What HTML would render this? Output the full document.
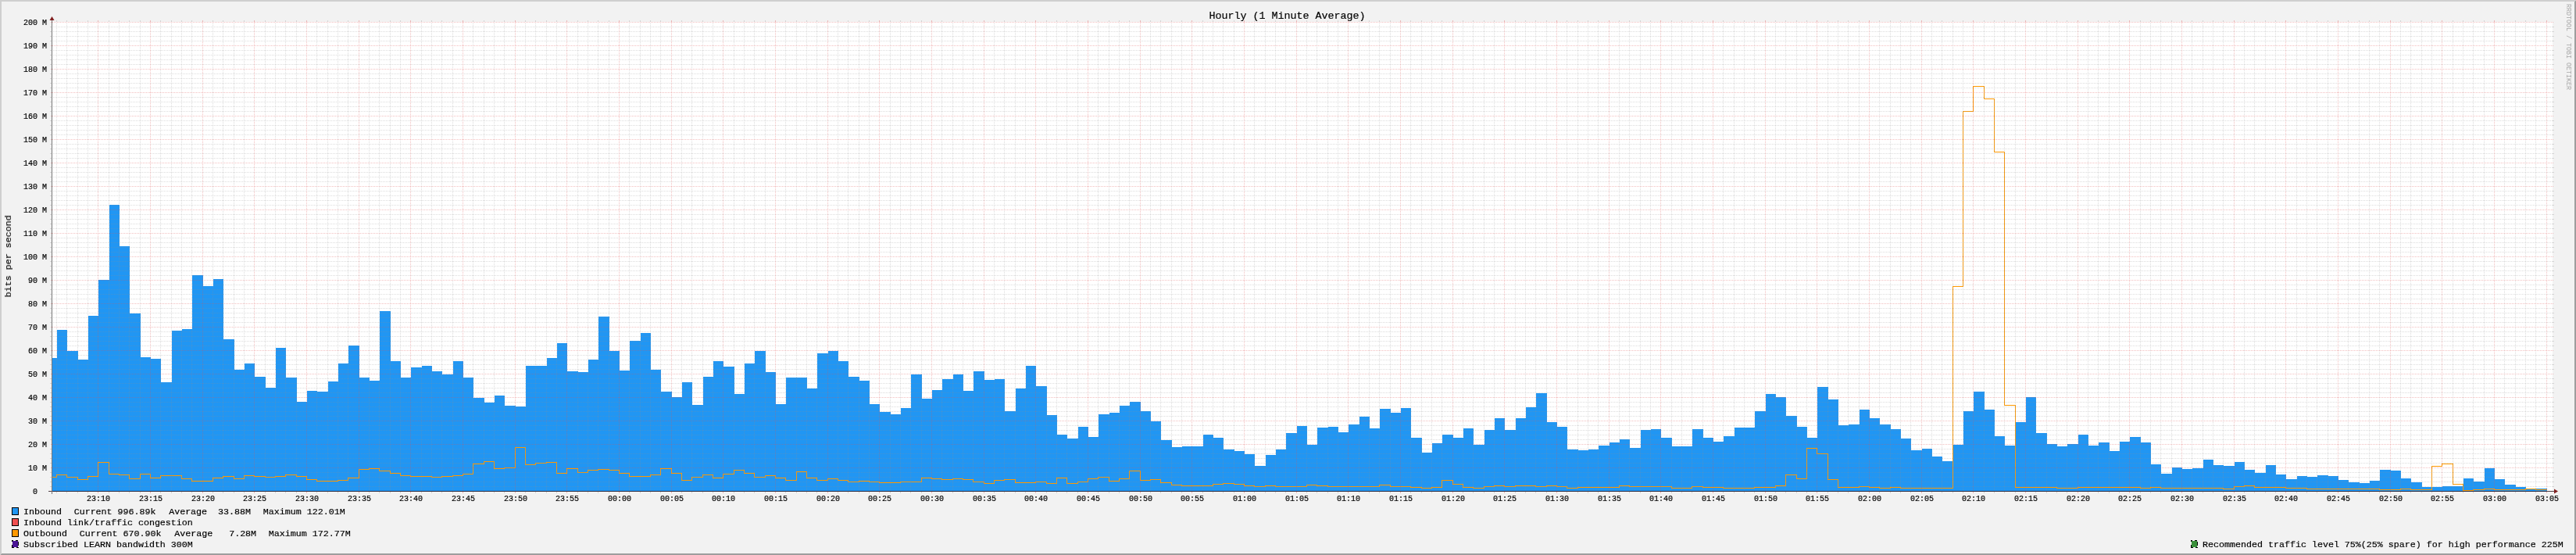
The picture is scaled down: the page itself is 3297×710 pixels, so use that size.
<!DOCTYPE html><html><head><meta charset="utf-8"><style>html,body{margin:0;padding:0;background:#F2F2F2;overflow:hidden}svg{display:block}</style></head><body><svg width="3297" height="710" viewBox="0 0 3297 710" shape-rendering="crispEdges"><rect x="0" y="0" width="3297" height="710" fill="#F2F2F2"/><polygon points="0,0 3297,0 3295,2 2,2 2,708 0,710" fill="#CFCFCF"/><polygon points="0,710 3297,710 3297,0 3295,2 3295,708 2,708" fill="#9E9E9E"/><rect x="67" y="28" width="3200" height="600" fill="#FFFFFF"/><path d="M67 458H73V629H67ZM73 422H86V629H73ZM86 449H100V629H86ZM100 460H113V629H100ZM113 404H126V629H113ZM126 358H140V629H126ZM140 262H153V629H140ZM153 315H166V629H153ZM166 401H180V629H166ZM180 457H193V629H180ZM193 459H206V629H193ZM206 489H220V629H206ZM220 423H233V629H220ZM233 421H246V629H233ZM246 352H260V629H246ZM260 366H273V629H260ZM273 357H286V629H273ZM286 434H300V629H286ZM300 473H313V629H300ZM313 465H326V629H313ZM326 482H340V629H326ZM340 496H353V629H340ZM353 445H366V629H353ZM366 483H380V629H366ZM380 514H393V629H380ZM393 500H406V629H393ZM406 501H420V629H406ZM420 488H433V629H420ZM433 465H446V629H433ZM446 442H460V629H446ZM460 483H473V629H460ZM473 487H486V629H473ZM486 398H500V629H486ZM500 462H513V629H500ZM513 483H526V629H513ZM526 470H540V629H526ZM540 468H553V629H540ZM553 475H566V629H553ZM566 479H580V629H566ZM580 462H593V629H580ZM593 483H606V629H593ZM606 509H620V629H606ZM620 515H633V629H620ZM633 506H646V629H633ZM646 519H660V629H646ZM660 520H673V629H660ZM673 468H686V629H673ZM686 468H700V629H686ZM700 458H713V629H700ZM713 439H726V629H713ZM726 475H740V629H726ZM740 476H753V629H740ZM753 460H766V629H753ZM766 405H780V629H766ZM780 449H793V629H780ZM793 474H806V629H793ZM806 436H820V629H806ZM820 426H833V629H820ZM833 473H846V629H833ZM846 501H860V629H846ZM860 508H873V629H860ZM873 489H886V629H873ZM886 518H900V629H886ZM900 482H913V629H900ZM913 462H926V629H913ZM926 469H940V629H926ZM940 504H953V629H940ZM953 465H966V629H953ZM966 449H980V629H966ZM980 476H993V629H980ZM993 517H1006V629H993ZM1006 483H1020V629H1006ZM1020 483H1033V629H1020ZM1033 497H1046V629H1033ZM1046 452H1060V629H1046ZM1060 449H1073V629H1060ZM1073 462H1086V629H1073ZM1086 482H1100V629H1086ZM1100 487H1113V629H1100ZM1113 517H1126V629H1113ZM1126 527H1140V629H1126ZM1140 530H1153V629H1140ZM1153 522H1166V629H1153ZM1166 479H1180V629H1166ZM1180 510H1193V629H1180ZM1193 499H1206V629H1193ZM1206 485H1220V629H1206ZM1220 479H1233V629H1220ZM1233 500H1246V629H1233ZM1246 475H1260V629H1246ZM1260 486H1273V629H1260ZM1273 485H1286V629H1273ZM1286 526H1300V629H1286ZM1300 497H1313V629H1300ZM1313 468H1326V629H1313ZM1326 494H1340V629H1326ZM1340 531H1353V629H1340ZM1353 556H1366V629H1353ZM1366 561H1380V629H1366ZM1380 546H1393V629H1380ZM1393 559H1406V629H1393ZM1406 530H1420V629H1406ZM1420 528H1433V629H1420ZM1433 519H1446V629H1433ZM1446 514H1460V629H1446ZM1460 526H1473V629H1460ZM1473 539H1486V629H1473ZM1486 563H1500V629H1486ZM1500 572H1513V629H1500ZM1513 571H1526V629H1513ZM1526 571H1540V629H1526ZM1540 556H1553V629H1540ZM1553 560H1566V629H1553ZM1566 575H1580V629H1566ZM1580 577H1593V629H1580ZM1593 581H1606V629H1593ZM1606 596H1620V629H1606ZM1620 582H1633V629H1620ZM1633 575H1646V629H1633ZM1646 554H1660V629H1646ZM1660 545H1673V629H1660ZM1673 569H1686V629H1673ZM1686 547H1700V629H1686ZM1700 546H1713V629H1700ZM1713 553H1726V629H1713ZM1726 543H1740V629H1726ZM1740 533H1753V629H1740ZM1753 548H1766V629H1753ZM1766 523H1780V629H1766ZM1780 528H1793V629H1780ZM1793 522H1806V629H1793ZM1806 560H1820V629H1806ZM1820 579H1833V629H1820ZM1833 567H1846V629H1833ZM1846 556H1860V629H1846ZM1860 560H1873V629H1860ZM1873 548H1886V629H1873ZM1886 569H1900V629H1886ZM1900 550H1913V629H1900ZM1913 535H1926V629H1913ZM1926 550H1940V629H1926ZM1940 535H1953V629H1940ZM1953 521H1966V629H1953ZM1966 503H1980V629H1966ZM1980 540H1993V629H1980ZM1993 546H2006V629H1993ZM2006 575H2020V629H2006ZM2020 576H2033V629H2020ZM2033 575H2046V629H2033ZM2046 570H2060V629H2046ZM2060 566H2073V629H2060ZM2073 562H2086V629H2073ZM2086 573H2100V629H2086ZM2100 550H2113V629H2100ZM2113 549H2126V629H2113ZM2126 560H2140V629H2126ZM2140 571H2153V629H2140ZM2153 571H2166V629H2153ZM2166 549H2180V629H2166ZM2180 560H2193V629H2180ZM2193 565H2206V629H2193ZM2206 558H2220V629H2206ZM2220 547H2233V629H2220ZM2233 547H2246V629H2233ZM2246 526H2260V629H2246ZM2260 504H2273V629H2260ZM2273 508H2286V629H2273ZM2286 532H2300V629H2286ZM2300 546H2313V629H2300ZM2313 560H2326V629H2313ZM2326 495H2340V629H2326ZM2340 511H2353V629H2340ZM2353 544H2366V629H2353ZM2366 543H2380V629H2366ZM2380 524H2393V629H2380ZM2393 535H2406V629H2393ZM2406 543H2420V629H2406ZM2420 549H2433V629H2420ZM2433 561H2446V629H2433ZM2446 576H2460V629H2446ZM2460 574H2473V629H2460ZM2473 584H2486V629H2473ZM2486 590H2500V629H2486ZM2500 569H2513V629H2500ZM2513 526H2526V629H2513ZM2526 501H2540V629H2526ZM2540 524H2553V629H2540ZM2553 558H2566V629H2553ZM2566 570H2580V629H2566ZM2580 540H2593V629H2580ZM2593 508H2606V629H2593ZM2606 554H2620V629H2606ZM2620 568H2633V629H2620ZM2633 571H2646V629H2633ZM2646 568H2660V629H2646ZM2660 556H2673V629H2660ZM2673 570H2686V629H2673ZM2686 566H2700V629H2686ZM2700 577H2713V629H2700ZM2713 565H2726V629H2713ZM2726 559H2740V629H2726ZM2740 566H2753V629H2740ZM2753 594H2766V629H2753ZM2766 606H2780V629H2766ZM2780 598H2793V629H2780ZM2793 600H2806V629H2793ZM2806 599H2820V629H2806ZM2820 588H2833V629H2820ZM2833 595H2846V629H2833ZM2846 596H2860V629H2846ZM2860 591H2873V629H2860ZM2873 601H2886V629H2873ZM2886 605H2900V629H2886ZM2900 595H2913V629H2900ZM2913 607H2926V629H2913ZM2926 613H2940V629H2926ZM2940 609H2953V629H2940ZM2953 610H2966V629H2953ZM2966 608H2980V629H2966ZM2980 609H2993V629H2980ZM2993 614H3006V629H2993ZM3006 617H3020V629H3006ZM3020 618H3033V629H3020ZM3033 615H3046V629H3033ZM3046 601H3060V629H3046ZM3060 602H3073V629H3060ZM3073 612H3086V629H3073ZM3086 617H3100V629H3086ZM3100 623H3113V629H3100ZM3113 623H3126V629H3113ZM3126 622H3140V629H3126ZM3140 622H3153V629H3140ZM3153 612H3166V629H3153ZM3166 616H3180V629H3166ZM3180 599H3193V629H3180ZM3193 613H3206V629H3193ZM3206 620H3220V629H3206ZM3220 623H3233V629H3220ZM3233 625H3246V629H3233ZM3246 625H3260V629H3246Z" fill="#2196F3"/><path d="M67 610.5H72.5V607.5H85.5V610.5H99.5V613.5H112.5V609.5H125.5V591.5H139.5V606.5H152.5V607.5H165.5V612.5H179.5V606.5H192.5V611.5H205.5V608.5H219.5V608.5H232.5V612.5H245.5V615.5H259.5V615.5H272.5V611.5H285.5V609.5H299.5V612.5H312.5V608.5H325.5V609.5H339.5V610.5H352.5V609.5H365.5V607.5H379.5V609.5H392.5V613.5H405.5V615.5H419.5V615.5H432.5V614.5H445.5V611.5H459.5V600.5H472.5V599.5H485.5V602.5H499.5V605.5H512.5V608.5H525.5V609.5H539.5V609.5H552.5V610.5H565.5V609.5H579.5V608.5H592.5V606.5H605.5V593.5H619.5V590.5H632.5V599.5H645.5V598.5H659.5V572.5H672.5V594.5H685.5V592.5H699.5V591.5H712.5V605.5H725.5V599.5H739.5V604.5H752.5V601.5H765.5V600.5H779.5V601.5H792.5V605.5H805.5V609.5H819.5V609.5H832.5V607.5H845.5V599.5H859.5V605.5H872.5V614.5H885.5V610.5H899.5V607.5H912.5V611.5H925.5V606.5H939.5V601.5H952.5V605.5H965.5V610.5H979.5V608.5H992.5V611.5H1005.5V614.5H1019.5V603.5H1032.5V611.5H1045.5V614.5H1059.5V612.5H1072.5V614.5H1085.5V616.5H1099.5V615.5H1112.5V616.5H1125.5V617.5H1139.5V617.5H1152.5V616.5H1165.5V616.5H1179.5V611.5H1192.5V612.5H1205.5V613.5H1219.5V612.5H1232.5V613.5H1245.5V616.5H1259.5V618.5H1272.5V614.5H1285.5V613.5H1299.5V617.5H1312.5V617.5H1325.5V616.5H1339.5V618.5H1352.5V611.5H1365.5V618.5H1379.5V616.5H1392.5V612.5H1405.5V610.5H1419.5V615.5H1432.5V612.5H1445.5V602.5H1459.5V614.5H1472.5V613.5H1485.5V617.5H1499.5V620.5H1512.5V621.5H1525.5V621.5H1539.5V621.5H1552.5V619.5H1565.5V618.5H1579.5V619.5H1592.5V621.5H1605.5V622.5H1619.5V621.5H1632.5V622.5H1645.5V622.5H1659.5V622.5H1672.5V620.5H1685.5V621.5H1699.5V622.5H1712.5V622.5H1725.5V622.5H1739.5V622.5H1752.5V622.5H1765.5V620.5H1779.5V622.5H1792.5V622.5H1805.5V623.5H1819.5V624.5H1832.5V623.5H1845.5V614.5H1859.5V619.5H1872.5V623.5H1885.5V624.5H1899.5V622.5H1912.5V621.5H1925.5V622.5H1939.5V621.5H1952.5V621.5H1965.5V622.5H1979.5V621.5H1992.5V622.5H2005.5V624.5H2019.5V623.5H2032.5V623.5H2045.5V623.5H2059.5V623.5H2072.5V621.5H2085.5V622.5H2099.5V622.5H2112.5V622.5H2125.5V622.5H2139.5V624.5H2152.5V624.5H2165.5V622.5H2179.5V623.5H2192.5V623.5H2205.5V624.5H2219.5V624.5H2232.5V624.5H2245.5V623.5H2259.5V623.5H2272.5V621.5H2285.5V607.5H2299.5V612.5H2312.5V573.5H2325.5V580.5H2339.5V613.5H2352.5V623.5H2365.5V623.5H2379.5V622.5H2392.5V623.5H2405.5V624.5H2419.5V623.5H2432.5V624.5H2445.5V624.5H2459.5V624.5H2472.5V624.5H2485.5V624.5H2499.5V366.5H2512.5V142.5H2525.5V110.5H2539.5V126.5H2552.5V194.5H2565.5V518.5H2579.5V623.5H2592.5V623.5H2605.5V623.5H2619.5V623.5H2632.5V624.5H2645.5V624.5H2659.5V623.5H2672.5V623.5H2685.5V623.5H2699.5V623.5H2712.5V623.5H2725.5V623.5H2739.5V624.5H2752.5V623.5H2765.5V624.5H2779.5V624.5H2792.5V624.5H2805.5V624.5H2819.5V624.5H2832.5V624.5H2845.5V625.5H2859.5V622.5H2872.5V621.5H2885.5V623.5H2899.5V623.5H2912.5V623.5H2925.5V624.5H2939.5V624.5H2952.5V625.5H2965.5V625.5H2979.5V625.5H2992.5V625.5H3005.5V625.5H3019.5V625.5H3032.5V625.5H3045.5V626.5H3059.5V626.5H3072.5V625.5H3085.5V626.5H3099.5V626.5H3112.5V596.5H3125.5V593.5H3139.5V619.5H3152.5V627.5H3165.5V626.5H3179.5V625.5H3192.5V626.5H3205.5V626.5H3219.5V626.5H3232.5V625.5H3245.5V626.5H3259.5" fill="none" stroke="#FF9900" stroke-width="1" stroke-linecap="square"/><path d="M66 622.5H3267M66 616.5H3267M66 610.5H3267M66 604.5H3267M66 592.5H3267M66 586.5H3267M66 580.5H3267M66 574.5H3267M66 562.5H3267M66 556.5H3267M66 550.5H3267M66 544.5H3267M66 532.5H3267M66 526.5H3267M66 520.5H3267M66 514.5H3267M66 502.5H3267M66 496.5H3267M66 490.5H3267M66 484.5H3267M66 472.5H3267M66 466.5H3267M66 460.5H3267M66 454.5H3267M66 442.5H3267M66 436.5H3267M66 430.5H3267M66 424.5H3267M66 412.5H3267M66 406.5H3267M66 400.5H3267M66 394.5H3267M66 382.5H3267M66 376.5H3267M66 370.5H3267M66 364.5H3267M66 352.5H3267M66 346.5H3267M66 340.5H3267M66 334.5H3267M66 322.5H3267M66 316.5H3267M66 310.5H3267M66 304.5H3267M66 292.5H3267M66 286.5H3267M66 280.5H3267M66 274.5H3267M66 262.5H3267M66 256.5H3267M66 250.5H3267M66 244.5H3267M66 232.5H3267M66 226.5H3267M66 220.5H3267M66 214.5H3267M66 202.5H3267M66 196.5H3267M66 190.5H3267M66 184.5H3267M66 172.5H3267M66 166.5H3267M66 160.5H3267M66 154.5H3267M66 142.5H3267M66 136.5H3267M66 130.5H3267M66 124.5H3267M66 112.5H3267M66 106.5H3267M66 100.5H3267M66 94.5H3267M66 82.5H3267M66 76.5H3267M66 70.5H3267M66 64.5H3267M66 52.5H3267M66 46.5H3267M66 40.5H3267M66 34.5H3267" stroke="rgba(143,143,143,0.3)" stroke-width="1" stroke-dasharray="1 1" fill="none"/><path d="M72.5 30V628M85.5 30V628M99.5 30V628M112.5 30V628M139.5 30V628M152.5 30V628M165.5 30V628M179.5 30V628M205.5 30V628M219.5 30V628M232.5 30V628M245.5 30V628M272.5 30V628M285.5 30V628M299.5 30V628M312.5 30V628M339.5 30V628M352.5 30V628M365.5 30V628M379.5 30V628M405.5 30V628M419.5 30V628M432.5 30V628M445.5 30V628M472.5 30V628M485.5 30V628M499.5 30V628M512.5 30V628M539.5 30V628M552.5 30V628M565.5 30V628M579.5 30V628M605.5 30V628M619.5 30V628M632.5 30V628M645.5 30V628M672.5 30V628M685.5 30V628M699.5 30V628M712.5 30V628M739.5 30V628M752.5 30V628M765.5 30V628M779.5 30V628M805.5 30V628M819.5 30V628M832.5 30V628M845.5 30V628M872.5 30V628M885.5 30V628M899.5 30V628M912.5 30V628M939.5 30V628M952.5 30V628M965.5 30V628M979.5 30V628M1005.5 30V628M1019.5 30V628M1032.5 30V628M1045.5 30V628M1072.5 30V628M1085.5 30V628M1099.5 30V628M1112.5 30V628M1139.5 30V628M1152.5 30V628M1165.5 30V628M1179.5 30V628M1205.5 30V628M1219.5 30V628M1232.5 30V628M1245.5 30V628M1272.5 30V628M1285.5 30V628M1299.5 30V628M1312.5 30V628M1339.5 30V628M1352.5 30V628M1365.5 30V628M1379.5 30V628M1405.5 30V628M1419.5 30V628M1432.5 30V628M1445.5 30V628M1472.5 30V628M1485.5 30V628M1499.5 30V628M1512.5 30V628M1539.5 30V628M1552.5 30V628M1565.5 30V628M1579.5 30V628M1605.5 30V628M1619.5 30V628M1632.5 30V628M1645.5 30V628M1672.5 30V628M1685.5 30V628M1699.5 30V628M1712.5 30V628M1739.5 30V628M1752.5 30V628M1765.5 30V628M1779.5 30V628M1805.5 30V628M1819.5 30V628M1832.5 30V628M1845.5 30V628M1872.5 30V628M1885.5 30V628M1899.5 30V628M1912.5 30V628M1939.5 30V628M1952.5 30V628M1965.5 30V628M1979.5 30V628M2005.5 30V628M2019.5 30V628M2032.5 30V628M2045.5 30V628M2072.5 30V628M2085.5 30V628M2099.5 30V628M2112.5 30V628M2139.5 30V628M2152.5 30V628M2165.5 30V628M2179.5 30V628M2205.5 30V628M2219.5 30V628M2232.5 30V628M2245.5 30V628M2272.5 30V628M2285.5 30V628M2299.5 30V628M2312.5 30V628M2339.5 30V628M2352.5 30V628M2365.5 30V628M2379.5 30V628M2405.5 30V628M2419.5 30V628M2432.5 30V628M2445.5 30V628M2472.5 30V628M2485.5 30V628M2499.5 30V628M2512.5 30V628M2539.5 30V628M2552.5 30V628M2565.5 30V628M2579.5 30V628M2605.5 30V628M2619.5 30V628M2632.5 30V628M2645.5 30V628M2672.5 30V628M2685.5 30V628M2699.5 30V628M2712.5 30V628M2739.5 30V628M2752.5 30V628M2765.5 30V628M2779.5 30V628M2805.5 30V628M2819.5 30V628M2832.5 30V628M2845.5 30V628M2872.5 30V628M2885.5 30V628M2899.5 30V628M2912.5 30V628M2939.5 30V628M2952.5 30V628M2965.5 30V628M2979.5 30V628M3005.5 30V628M3019.5 30V628M3032.5 30V628M3045.5 30V628M3072.5 30V628M3085.5 30V628M3099.5 30V628M3112.5 30V628M3139.5 30V628M3152.5 30V628M3165.5 30V628M3179.5 30V628M3205.5 30V628M3219.5 30V628M3232.5 30V628M3245.5 30V628" stroke="rgba(143,143,143,0.3)" stroke-width="1" stroke-dasharray="1 1" fill="none"/><path d="M64 622.5H66M3267 622.5H3269M64 616.5H66M3267 616.5H3269M64 610.5H66M3267 610.5H3269M64 604.5H66M3267 604.5H3269M64 592.5H66M3267 592.5H3269M64 586.5H66M3267 586.5H3269M64 580.5H66M3267 580.5H3269M64 574.5H66M3267 574.5H3269M64 562.5H66M3267 562.5H3269M64 556.5H66M3267 556.5H3269M64 550.5H66M3267 550.5H3269M64 544.5H66M3267 544.5H3269M64 532.5H66M3267 532.5H3269M64 526.5H66M3267 526.5H3269M64 520.5H66M3267 520.5H3269M64 514.5H66M3267 514.5H3269M64 502.5H66M3267 502.5H3269M64 496.5H66M3267 496.5H3269M64 490.5H66M3267 490.5H3269M64 484.5H66M3267 484.5H3269M64 472.5H66M3267 472.5H3269M64 466.5H66M3267 466.5H3269M64 460.5H66M3267 460.5H3269M64 454.5H66M3267 454.5H3269M64 442.5H66M3267 442.5H3269M64 436.5H66M3267 436.5H3269M64 430.5H66M3267 430.5H3269M64 424.5H66M3267 424.5H3269M64 412.5H66M3267 412.5H3269M64 406.5H66M3267 406.5H3269M64 400.5H66M3267 400.5H3269M64 394.5H66M3267 394.5H3269M64 382.5H66M3267 382.5H3269M64 376.5H66M3267 376.5H3269M64 370.5H66M3267 370.5H3269M64 364.5H66M3267 364.5H3269M64 352.5H66M3267 352.5H3269M64 346.5H66M3267 346.5H3269M64 340.5H66M3267 340.5H3269M64 334.5H66M3267 334.5H3269M64 322.5H66M3267 322.5H3269M64 316.5H66M3267 316.5H3269M64 310.5H66M3267 310.5H3269M64 304.5H66M3267 304.5H3269M64 292.5H66M3267 292.5H3269M64 286.5H66M3267 286.5H3269M64 280.5H66M3267 280.5H3269M64 274.5H66M3267 274.5H3269M64 262.5H66M3267 262.5H3269M64 256.5H66M3267 256.5H3269M64 250.5H66M3267 250.5H3269M64 244.5H66M3267 244.5H3269M64 232.5H66M3267 232.5H3269M64 226.5H66M3267 226.5H3269M64 220.5H66M3267 220.5H3269M64 214.5H66M3267 214.5H3269M64 202.5H66M3267 202.5H3269M64 196.5H66M3267 196.5H3269M64 190.5H66M3267 190.5H3269M64 184.5H66M3267 184.5H3269M64 172.5H66M3267 172.5H3269M64 166.5H66M3267 166.5H3269M64 160.5H66M3267 160.5H3269M64 154.5H66M3267 154.5H3269M64 142.5H66M3267 142.5H3269M64 136.5H66M3267 136.5H3269M64 130.5H66M3267 130.5H3269M64 124.5H66M3267 124.5H3269M64 112.5H66M3267 112.5H3269M64 106.5H66M3267 106.5H3269M64 100.5H66M3267 100.5H3269M64 94.5H66M3267 94.5H3269M64 82.5H66M3267 82.5H3269M64 76.5H66M3267 76.5H3269M64 70.5H66M3267 70.5H3269M64 64.5H66M3267 64.5H3269M64 52.5H66M3267 52.5H3269M64 46.5H66M3267 46.5H3269M64 40.5H66M3267 40.5H3269M64 34.5H66M3267 34.5H3269M72.5 26V28M72.5 628V631M85.5 26V28M85.5 628V631M99.5 26V28M99.5 628V631M112.5 26V28M112.5 628V631M139.5 26V28M139.5 628V631M152.5 26V28M152.5 628V631M165.5 26V28M165.5 628V631M179.5 26V28M179.5 628V631M205.5 26V28M205.5 628V631M219.5 26V28M219.5 628V631M232.5 26V28M232.5 628V631M245.5 26V28M245.5 628V631M272.5 26V28M272.5 628V631M285.5 26V28M285.5 628V631M299.5 26V28M299.5 628V631M312.5 26V28M312.5 628V631M339.5 26V28M339.5 628V631M352.5 26V28M352.5 628V631M365.5 26V28M365.5 628V631M379.5 26V28M379.5 628V631M405.5 26V28M405.5 628V631M419.5 26V28M419.5 628V631M432.5 26V28M432.5 628V631M445.5 26V28M445.5 628V631M472.5 26V28M472.5 628V631M485.5 26V28M485.5 628V631M499.5 26V28M499.5 628V631M512.5 26V28M512.5 628V631M539.5 26V28M539.5 628V631M552.5 26V28M552.5 628V631M565.5 26V28M565.5 628V631M579.5 26V28M579.5 628V631M605.5 26V28M605.5 628V631M619.5 26V28M619.5 628V631M632.5 26V28M632.5 628V631M645.5 26V28M645.5 628V631M672.5 26V28M672.5 628V631M685.5 26V28M685.5 628V631M699.5 26V28M699.5 628V631M712.5 26V28M712.5 628V631M739.5 26V28M739.5 628V631M752.5 26V28M752.5 628V631M765.5 26V28M765.5 628V631M779.5 26V28M779.5 628V631M805.5 26V28M805.5 628V631M819.5 26V28M819.5 628V631M832.5 26V28M832.5 628V631M845.5 26V28M845.5 628V631M872.5 26V28M872.5 628V631M885.5 26V28M885.5 628V631M899.5 26V28M899.5 628V631M912.5 26V28M912.5 628V631M939.5 26V28M939.5 628V631M952.5 26V28M952.5 628V631M965.5 26V28M965.5 628V631M979.5 26V28M979.5 628V631M1005.5 26V28M1005.5 628V631M1019.5 26V28M1019.5 628V631M1032.5 26V28M1032.5 628V631M1045.5 26V28M1045.5 628V631M1072.5 26V28M1072.5 628V631M1085.5 26V28M1085.5 628V631M1099.5 26V28M1099.5 628V631M1112.5 26V28M1112.5 628V631M1139.5 26V28M1139.5 628V631M1152.5 26V28M1152.5 628V631M1165.5 26V28M1165.5 628V631M1179.5 26V28M1179.5 628V631M1205.5 26V28M1205.5 628V631M1219.5 26V28M1219.5 628V631M1232.5 26V28M1232.5 628V631M1245.5 26V28M1245.5 628V631M1272.5 26V28M1272.5 628V631M1285.5 26V28M1285.5 628V631M1299.5 26V28M1299.5 628V631M1312.5 26V28M1312.5 628V631M1339.5 26V28M1339.5 628V631M1352.5 26V28M1352.5 628V631M1365.5 26V28M1365.5 628V631M1379.5 26V28M1379.5 628V631M1405.5 26V28M1405.5 628V631M1419.5 26V28M1419.5 628V631M1432.5 26V28M1432.5 628V631M1445.5 26V28M1445.5 628V631M1472.5 26V28M1472.5 628V631M1485.5 26V28M1485.5 628V631M1499.5 26V28M1499.5 628V631M1512.5 26V28M1512.5 628V631M1539.5 26V28M1539.5 628V631M1552.5 26V28M1552.5 628V631M1565.5 26V28M1565.5 628V631M1579.5 26V28M1579.5 628V631M1605.5 26V28M1605.5 628V631M1619.5 26V28M1619.5 628V631M1632.5 26V28M1632.5 628V631M1645.5 26V28M1645.5 628V631M1672.5 26V28M1672.5 628V631M1685.5 26V28M1685.5 628V631M1699.5 26V28M1699.5 628V631M1712.5 26V28M1712.5 628V631M1739.5 26V28M1739.5 628V631M1752.5 26V28M1752.5 628V631M1765.5 26V28M1765.5 628V631M1779.5 26V28M1779.5 628V631M1805.5 26V28M1805.5 628V631M1819.5 26V28M1819.5 628V631M1832.5 26V28M1832.5 628V631M1845.5 26V28M1845.5 628V631M1872.5 26V28M1872.5 628V631M1885.5 26V28M1885.5 628V631M1899.5 26V28M1899.5 628V631M1912.5 26V28M1912.5 628V631M1939.5 26V28M1939.5 628V631M1952.5 26V28M1952.5 628V631M1965.5 26V28M1965.5 628V631M1979.5 26V28M1979.5 628V631M2005.5 26V28M2005.5 628V631M2019.5 26V28M2019.5 628V631M2032.5 26V28M2032.5 628V631M2045.5 26V28M2045.5 628V631M2072.5 26V28M2072.5 628V631M2085.5 26V28M2085.5 628V631M2099.5 26V28M2099.5 628V631M2112.5 26V28M2112.5 628V631M2139.5 26V28M2139.5 628V631M2152.5 26V28M2152.5 628V631M2165.5 26V28M2165.5 628V631M2179.5 26V28M2179.5 628V631M2205.5 26V28M2205.5 628V631M2219.5 26V28M2219.5 628V631M2232.5 26V28M2232.5 628V631M2245.5 26V28M2245.5 628V631M2272.5 26V28M2272.5 628V631M2285.5 26V28M2285.5 628V631M2299.5 26V28M2299.5 628V631M2312.5 26V28M2312.5 628V631M2339.5 26V28M2339.5 628V631M2352.5 26V28M2352.5 628V631M2365.5 26V28M2365.5 628V631M2379.5 26V28M2379.5 628V631M2405.5 26V28M2405.5 628V631M2419.5 26V28M2419.5 628V631M2432.5 26V28M2432.5 628V631M2445.5 26V28M2445.5 628V631M2472.5 26V28M2472.5 628V631M2485.5 26V28M2485.5 628V631M2499.5 26V28M2499.5 628V631M2512.5 26V28M2512.5 628V631M2539.5 26V28M2539.5 628V631M2552.5 26V28M2552.5 628V631M2565.5 26V28M2565.5 628V631M2579.5 26V28M2579.5 628V631M2605.5 26V28M2605.5 628V631M2619.5 26V28M2619.5 628V631M2632.5 26V28M2632.5 628V631M2645.5 26V28M2645.5 628V631M2672.5 26V28M2672.5 628V631M2685.5 26V28M2685.5 628V631M2699.5 26V28M2699.5 628V631M2712.5 26V28M2712.5 628V631M2739.5 26V28M2739.5 628V631M2752.5 26V28M2752.5 628V631M2765.5 26V28M2765.5 628V631M2779.5 26V28M2779.5 628V631M2805.5 26V28M2805.5 628V631M2819.5 26V28M2819.5 628V631M2832.5 26V28M2832.5 628V631M2845.5 26V28M2845.5 628V631M2872.5 26V28M2872.5 628V631M2885.5 26V28M2885.5 628V631M2899.5 26V28M2899.5 628V631M2912.5 26V28M2912.5 628V631M2939.5 26V28M2939.5 628V631M2952.5 26V28M2952.5 628V631M2965.5 26V28M2965.5 628V631M2979.5 26V28M2979.5 628V631M3005.5 26V28M3005.5 628V631M3019.5 26V28M3019.5 628V631M3032.5 26V28M3032.5 628V631M3045.5 26V28M3045.5 628V631M3072.5 26V28M3072.5 628V631M3085.5 26V28M3085.5 628V631M3099.5 26V28M3099.5 628V631M3112.5 26V28M3112.5 628V631M3139.5 26V28M3139.5 628V631M3152.5 26V28M3152.5 628V631M3165.5 26V28M3165.5 628V631M3179.5 26V28M3179.5 628V631M3205.5 26V28M3205.5 628V631M3219.5 26V28M3219.5 628V631M3232.5 26V28M3232.5 628V631M3245.5 26V28M3245.5 628V631" stroke="rgba(143,143,143,0.3)" stroke-width="1" fill="none"/><path d="M65 598.5H3269M65 568.5H3269M65 538.5H3269M65 508.5H3269M65 478.5H3269M65 448.5H3269M65 418.5H3269M65 388.5H3269M65 358.5H3269M65 328.5H3269M65 298.5H3269M65 268.5H3269M65 238.5H3269M65 208.5H3269M65 178.5H3269M65 148.5H3269M65 118.5H3269M65 88.5H3269M65 58.5H3269M65 28.5H3269" stroke="rgba(222,79,79,0.36)" stroke-width="1" stroke-dasharray="1 1" fill="none"/><path d="M125.5 28V628M192.5 28V628M259.5 28V628M325.5 28V628M392.5 28V628M459.5 28V628M525.5 28V628M592.5 28V628M659.5 28V628M725.5 28V628M792.5 28V628M859.5 28V628M925.5 28V628M992.5 28V628M1059.5 28V628M1125.5 28V628M1192.5 28V628M1259.5 28V628M1325.5 28V628M1392.5 28V628M1459.5 28V628M1525.5 28V628M1592.5 28V628M1659.5 28V628M1725.5 28V628M1792.5 28V628M1859.5 28V628M1925.5 28V628M1992.5 28V628M2059.5 28V628M2125.5 28V628M2192.5 28V628M2259.5 28V628M2325.5 28V628M2392.5 28V628M2459.5 28V628M2525.5 28V628M2592.5 28V628M2659.5 28V628M2725.5 28V628M2792.5 28V628M2859.5 28V628M2925.5 28V628M2992.5 28V628M3059.5 28V628M3125.5 28V628M3192.5 28V628M3259.5 28V628" stroke="rgba(222,79,79,0.36)" stroke-width="1" stroke-dasharray="1 1" fill="none"/><path d="M125.5 26V28M125.5 628V631M192.5 26V28M192.5 628V631M259.5 26V28M259.5 628V631M325.5 26V28M325.5 628V631M392.5 26V28M392.5 628V631M459.5 26V28M459.5 628V631M525.5 26V28M525.5 628V631M592.5 26V28M592.5 628V631M659.5 26V28M659.5 628V631M725.5 26V28M725.5 628V631M792.5 26V28M792.5 628V631M859.5 26V28M859.5 628V631M925.5 26V28M925.5 628V631M992.5 26V28M992.5 628V631M1059.5 26V28M1059.5 628V631M1125.5 26V28M1125.5 628V631M1192.5 26V28M1192.5 628V631M1259.5 26V28M1259.5 628V631M1325.5 26V28M1325.5 628V631M1392.5 26V28M1392.5 628V631M1459.5 26V28M1459.5 628V631M1525.5 26V28M1525.5 628V631M1592.5 26V28M1592.5 628V631M1659.5 26V28M1659.5 628V631M1725.5 26V28M1725.5 628V631M1792.5 26V28M1792.5 628V631M1859.5 26V28M1859.5 628V631M1925.5 26V28M1925.5 628V631M1992.5 26V28M1992.5 628V631M2059.5 26V28M2059.5 628V631M2125.5 26V28M2125.5 628V631M2192.5 26V28M2192.5 628V631M2259.5 26V28M2259.5 628V631M2325.5 26V28M2325.5 628V631M2392.5 26V28M2392.5 628V631M2459.5 26V28M2459.5 628V631M2525.5 26V28M2525.5 628V631M2592.5 26V28M2592.5 628V631M2659.5 26V28M2659.5 628V631M2725.5 26V28M2725.5 628V631M2792.5 26V28M2792.5 628V631M2859.5 26V28M2859.5 628V631M2925.5 26V28M2925.5 628V631M2992.5 26V28M2992.5 628V631M3059.5 26V28M3059.5 628V631M3125.5 26V28M3125.5 628V631M3192.5 26V28M3192.5 628V631M3259.5 26V28M3259.5 628V631" stroke="rgba(222,79,79,0.36)" stroke-width="1" fill="none"/><path d="M62 628.5H3269" stroke="rgba(20,20,30,0.75)" stroke-width="1" fill="none"/><path d="M63 628.5H3269" stroke="rgba(100,20,20,0.5)" stroke-dasharray="1 1" stroke-width="1" fill="none"/><path d="M66.5 24V632" stroke="#787878" stroke-width="1" fill="none"/><polygon points="3269,625.5 3269,631.5 3274,628.5" fill="#801F1F" shape-rendering="auto"/><polygon points="63.5,26 69.5,26 66.5,21" fill="#801F1F" shape-rendering="auto"/><rect x="15.5" y="649.5" width="8" height="9" fill="#2196F3" stroke="#000" stroke-width="1"/><rect x="15.5" y="663.5" width="8" height="9" fill="#F05050" stroke="#000" stroke-width="1"/><rect x="15.5" y="677.5" width="8" height="9" fill="#FF9900" stroke="#000" stroke-width="1"/><rect x="16" y="692" width="7" height="8" fill="#4B1696"/><rect x="15" y="691" width="2" height="1" fill="#000"/><rect x="20" y="691" width="3" height="1" fill="#000"/><rect x="23" y="693" width="1" height="5" fill="#000"/><rect x="15" y="700" width="3" height="1" fill="#000"/><rect x="21" y="700" width="3" height="1" fill="#000"/><rect x="15" y="691" width="1" height="2" fill="#000"/><rect x="15" y="697" width="1" height="4" fill="#000"/><rect x="2805" y="692" width="7" height="8" fill="#3A8F3A"/><rect x="2804" y="691" width="2" height="1" fill="#000"/><rect x="2809" y="691" width="3" height="1" fill="#000"/><rect x="2812" y="693" width="1" height="5" fill="#000"/><rect x="2804" y="700" width="3" height="1" fill="#000"/><rect x="2810" y="700" width="3" height="1" fill="#000"/><rect x="2804" y="691" width="1" height="2" fill="#000"/><rect x="2804" y="697" width="1" height="4" fill="#000"/><g style='font-family:"Liberation Mono",monospace' fill="#000" stroke="#000" stroke-width="0.2" opacity="0.999"><text x="1647.5" y="24" font-size="13.33" text-anchor="middle">Hourly (1 Minute Average)</text><text x="60" y="632" font-size="10" text-anchor="end" xml:space="preserve">0  </text><text x="60" y="602" font-size="10" text-anchor="end" xml:space="preserve">10 M</text><text x="60" y="572" font-size="10" text-anchor="end" xml:space="preserve">20 M</text><text x="60" y="542" font-size="10" text-anchor="end" xml:space="preserve">30 M</text><text x="60" y="512" font-size="10" text-anchor="end" xml:space="preserve">40 M</text><text x="60" y="482" font-size="10" text-anchor="end" xml:space="preserve">50 M</text><text x="60" y="452" font-size="10" text-anchor="end" xml:space="preserve">60 M</text><text x="60" y="422" font-size="10" text-anchor="end" xml:space="preserve">70 M</text><text x="60" y="392" font-size="10" text-anchor="end" xml:space="preserve">80 M</text><text x="60" y="362" font-size="10" text-anchor="end" xml:space="preserve">90 M</text><text x="60" y="332" font-size="10" text-anchor="end" xml:space="preserve">100 M</text><text x="60" y="302" font-size="10" text-anchor="end" xml:space="preserve">110 M</text><text x="60" y="272" font-size="10" text-anchor="end" xml:space="preserve">120 M</text><text x="60" y="242" font-size="10" text-anchor="end" xml:space="preserve">130 M</text><text x="60" y="212" font-size="10" text-anchor="end" xml:space="preserve">140 M</text><text x="60" y="182" font-size="10" text-anchor="end" xml:space="preserve">150 M</text><text x="60" y="152" font-size="10" text-anchor="end" xml:space="preserve">160 M</text><text x="60" y="122" font-size="10" text-anchor="end" xml:space="preserve">170 M</text><text x="60" y="92" font-size="10" text-anchor="end" xml:space="preserve">180 M</text><text x="60" y="62" font-size="10" text-anchor="end" xml:space="preserve">190 M</text><text x="60" y="32" font-size="10" text-anchor="end" xml:space="preserve">200 M</text><text x="126" y="641" font-size="10" text-anchor="middle">23:10</text><text x="193" y="641" font-size="10" text-anchor="middle">23:15</text><text x="260" y="641" font-size="10" text-anchor="middle">23:20</text><text x="326" y="641" font-size="10" text-anchor="middle">23:25</text><text x="393" y="641" font-size="10" text-anchor="middle">23:30</text><text x="460" y="641" font-size="10" text-anchor="middle">23:35</text><text x="526" y="641" font-size="10" text-anchor="middle">23:40</text><text x="593" y="641" font-size="10" text-anchor="middle">23:45</text><text x="660" y="641" font-size="10" text-anchor="middle">23:50</text><text x="726" y="641" font-size="10" text-anchor="middle">23:55</text><text x="793" y="641" font-size="10" text-anchor="middle">00:00</text><text x="860" y="641" font-size="10" text-anchor="middle">00:05</text><text x="926" y="641" font-size="10" text-anchor="middle">00:10</text><text x="993" y="641" font-size="10" text-anchor="middle">00:15</text><text x="1060" y="641" font-size="10" text-anchor="middle">00:20</text><text x="1126" y="641" font-size="10" text-anchor="middle">00:25</text><text x="1193" y="641" font-size="10" text-anchor="middle">00:30</text><text x="1260" y="641" font-size="10" text-anchor="middle">00:35</text><text x="1326" y="641" font-size="10" text-anchor="middle">00:40</text><text x="1393" y="641" font-size="10" text-anchor="middle">00:45</text><text x="1460" y="641" font-size="10" text-anchor="middle">00:50</text><text x="1526" y="641" font-size="10" text-anchor="middle">00:55</text><text x="1593" y="641" font-size="10" text-anchor="middle">01:00</text><text x="1660" y="641" font-size="10" text-anchor="middle">01:05</text><text x="1726" y="641" font-size="10" text-anchor="middle">01:10</text><text x="1793" y="641" font-size="10" text-anchor="middle">01:15</text><text x="1860" y="641" font-size="10" text-anchor="middle">01:20</text><text x="1926" y="641" font-size="10" text-anchor="middle">01:25</text><text x="1993" y="641" font-size="10" text-anchor="middle">01:30</text><text x="2060" y="641" font-size="10" text-anchor="middle">01:35</text><text x="2126" y="641" font-size="10" text-anchor="middle">01:40</text><text x="2193" y="641" font-size="10" text-anchor="middle">01:45</text><text x="2260" y="641" font-size="10" text-anchor="middle">01:50</text><text x="2326" y="641" font-size="10" text-anchor="middle">01:55</text><text x="2393" y="641" font-size="10" text-anchor="middle">02:00</text><text x="2460" y="641" font-size="10" text-anchor="middle">02:05</text><text x="2526" y="641" font-size="10" text-anchor="middle">02:10</text><text x="2593" y="641" font-size="10" text-anchor="middle">02:15</text><text x="2660" y="641" font-size="10" text-anchor="middle">02:20</text><text x="2726" y="641" font-size="10" text-anchor="middle">02:25</text><text x="2793" y="641" font-size="10" text-anchor="middle">02:30</text><text x="2860" y="641" font-size="10" text-anchor="middle">02:35</text><text x="2926" y="641" font-size="10" text-anchor="middle">02:40</text><text x="2993" y="641" font-size="10" text-anchor="middle">02:45</text><text x="3060" y="641" font-size="10" text-anchor="middle">02:50</text><text x="3126" y="641" font-size="10" text-anchor="middle">02:55</text><text x="3193" y="641" font-size="10" text-anchor="middle">03:00</text><text x="3260" y="641" font-size="10" text-anchor="middle">03:05</text><text transform="translate(14,327.8) rotate(-90)" font-size="11.67" text-anchor="middle">bits per second</text><text transform="translate(3285,60) rotate(90)" font-size="8.33" text-anchor="middle" fill="#A9A9A9" stroke="none">RRDTOOL / TOBI OETIKER</text><text x="30" y="658" font-size="11.67" xml:space="preserve">Inbound</text><text x="94.65" y="658" font-size="11.67" xml:space="preserve">Current 996.89k</text><text x="216.15" y="658" font-size="11.67" xml:space="preserve">Average  33.88M</text><text x="336.8" y="658" font-size="11.67" xml:space="preserve">Maximum 122.01M</text><text x="30" y="672" font-size="11.67" xml:space="preserve">Inbound link/traffic congestion</text><text x="30" y="686" font-size="11.67" xml:space="preserve">Outbound</text><text x="101.65" y="686" font-size="11.67" xml:space="preserve">Current 670.90k</text><text x="223.2" y="686" font-size="11.67" xml:space="preserve">Average   7.28M</text><text x="343.8" y="686" font-size="11.67" xml:space="preserve">Maximum 172.77M</text><text x="30" y="700" font-size="11.67" xml:space="preserve">Subscribed LEARN bandwidth 300M</text><text x="2819" y="700" font-size="11.67" xml:space="preserve">Recommended traffic level 75%(25% spare) for high performance 225M</text></g></svg></body></html>
